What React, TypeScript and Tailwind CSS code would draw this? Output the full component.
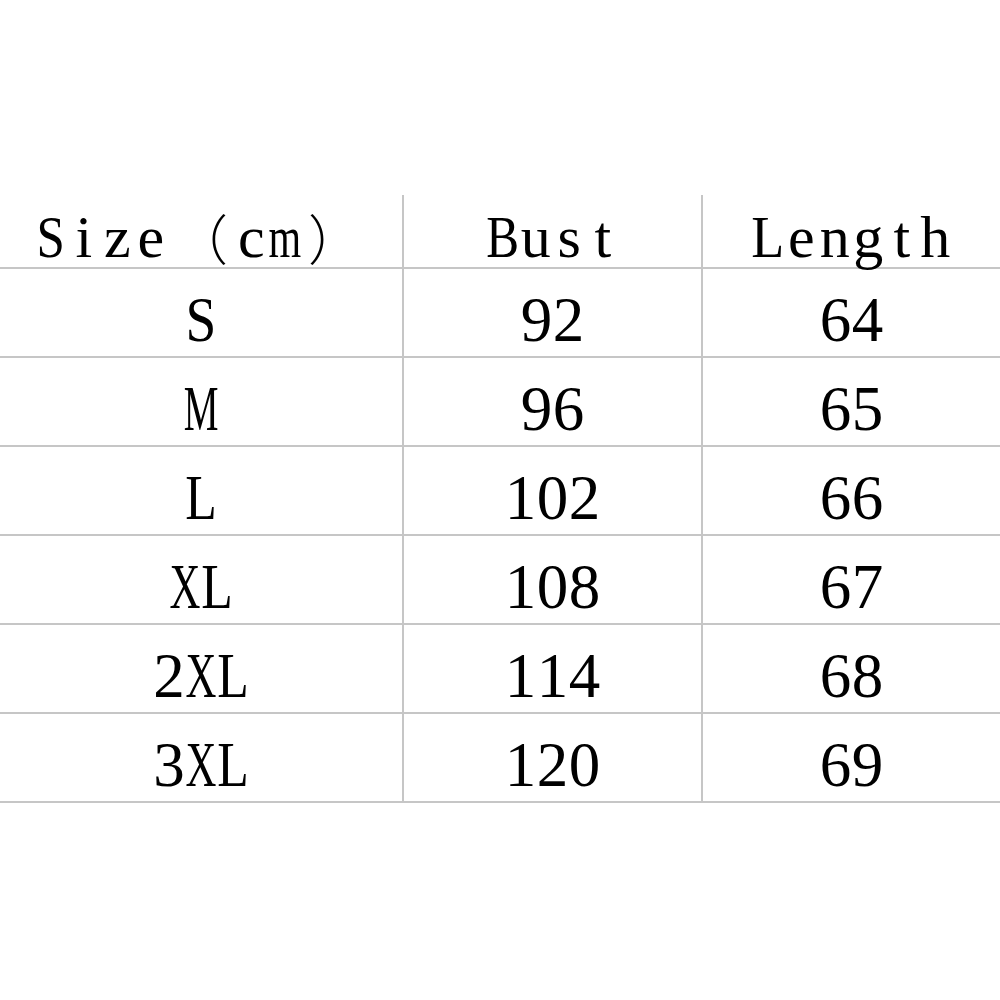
import React from "react";

const headers: string[][] = [
  ["S", "i", "z", "e", "（", "c", "m", "）"],
  ["B", "u", "s", "t"],
  ["L", "e", "n", "g", "t", "h"],
];

const rows: string[][] = [
  ["S", "92", "64"],
  ["M", "96", "65"],
  ["L", "102", "66"],
  ["XL", "108", "67"],
  ["2XL", "114", "68"],
  ["3XL", "120", "69"],
];

const headerScale: Record<string, string> = {
  S: "scale-x-[0.85]",
  B: "scale-x-[0.82]",
  m: "scale-x-[0.7]",
  L: "scale-x-[0.9]",
};

const dataScale: Record<string, string> = {
  M: "scale-x-[0.62]",
  X: "scale-x-[0.68]",
  L: "scale-x-[0.82]",
  S: "scale-x-[0.88]",
};

function HeaderText({ chars }: { chars: string[] }) {
  return (
    <span className="inline-flex items-center whitespace-nowrap">
      {chars.map((c, i) =>
        c === "（" || c === "）" ? (
          <span
            key={i}
            className="inline-flex justify-center w-[67px] text-[54px] font-light leading-none [font-family:'Noto_Sans_CJK_SC','Noto_Sans_CJK_JP',sans-serif]"
          >
            {c}
          </span>
        ) : (
          <span
            key={i}
            className={`inline-flex justify-center w-[33.5px] ${headerScale[c] ?? ""}`}
          >
            {c}
          </span>
        )
      )}
    </span>
  );
}

function DataText({ text }: { text: string }) {
  return (
    <span className="inline-flex whitespace-nowrap">
      {text.split("").map((c, i) => (
        <span
          key={i}
          className={`inline-flex justify-center w-[32px] ${dataScale[c] ?? ""}`}
        >
          {c}
        </span>
      ))}
    </span>
  );
}

export default function App() {
  const colBorder = ["border-r-2", "border-r-2", ""];
  return (
    <div className="w-[1000px] h-[1000px] bg-white pt-[195px] text-black [font-family:'Liberation_Serif','Times_New_Roman',serif]">
      <div className="grid grid-cols-[404px_299px_297px]">
        {headers.map((h, i) => (
          <div
            key={`h${i}`}
            className={`h-[74px] flex items-center justify-center pt-[12px] border-b-2 border-[#c6c6c6] text-[60px] leading-none ${colBorder[i]}`}
          >
            <HeaderText chars={h} />
          </div>
        ))}
        {rows.map((r, ri) =>
          r.map((v, ci) => (
            <div
              key={`r${ri}c${ci}`}
              className={`h-[89px] flex items-center justify-center pt-[16px] border-b-2 border-[#c6c6c6] text-[63px] leading-none ${colBorder[ci]}`}
            >
              <DataText text={v} />
            </div>
          ))
        )}
      </div>
    </div>
  );
}
